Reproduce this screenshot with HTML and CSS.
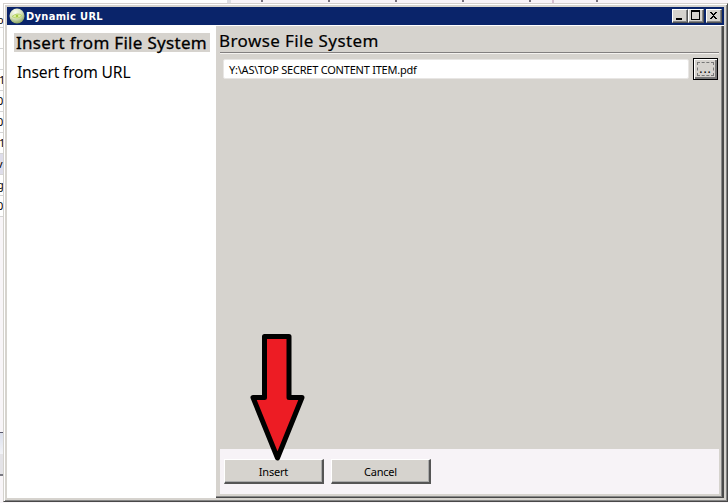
FILE: index.html
```
<!DOCTYPE html>
<html lang="en">
<head>
<meta charset="utf-8">
<title>Dynamic URL</title>
<link rel="stylesheet" href="styles.css">
</head>
<body>
<div class="backdrop">
  <div class="ticks"><i></i><i></i><i></i><i></i><i></i><i class="pink"></i><i></i></div>
  <div class="rows"><span class="first">o</span><span></span><span></span><span class="one">1</span><span>0</span><span>0</span><span class="one">1</span><span class="shade">v</span><span>g</span><span>0</span></div>
  <div class="lower"></div>
</div>
<main class="window">
  <header class="titlebar">
    <svg class="logo" width="16" height="16" viewBox="0 0 16 16">
      <defs><radialGradient id="orb" cx=".4" cy=".25" r=".8"><stop offset="0" stop-color="#fafbf3"/><stop offset=".55" stop-color="#d3dfb8"/><stop offset="1" stop-color="#7f9a50"/></radialGradient></defs>
      <circle cx="8" cy="8" r="7.5" fill="url(#orb)"/>
      <path d="M3 8.500Q8 4 13 7.500Q9 12 3 8.500Z" fill="#e0f0a8" stroke="#b4d165" stroke-width=".9"/>
      <circle cx="8" cy="8" r="1.300" fill="#a4ca42"/>
    </svg>
    <h1><span>Dynamic URL</span></h1>
    <div class="controls">
      <button><svg width="16" height="15"><path d="M4 10h6v2H4z"/></svg></button>
      <button><svg width="16" height="15"><path fill-rule="evenodd" d="M3 2h9v10H3zM4 4v7h7V4z"/></svg></button>
      <button class="close"><svg width="16" height="15"><path d="M4 4h2v1h1v1h1v-1h1v-1h2v1h-1v1h-1v1h-1v1h1v1h1v1h1v1H9v-1H8V9H7v1H6v1H4v-1h1V9h1V8h1V7H6V6H5V5H4z"/></svg></button>
    </div>
  </header>
  <div class="body">
    <nav>
      <a class="selected"><span>Insert from File System</span></a>
      <a><span class="narrow">Insert from URL</span></a>
    </nav>
    <section class="panel">
      <h2><span>Browse File System</span></h2>
      <div class="file">
        <div class="field"><span>Y:\AS\TOP SECRET CONTENT ITEM.pdf</span></div>
        <button class="browse"><span>...</span></button>
      </div>
      <footer>
        <button><span>Insert</span></button>
        <button><span>Cancel</span></button>
      </footer>
    </section>
  </div>
</main>
<svg class="arrow" width="56" height="130" viewBox="0 0 56 130">
  <path d="M15.500 4.500H40V65.500H53L28.500 126L4 65.500H15.500Z" fill="#ed1c24" stroke="#000" stroke-width="5" stroke-linejoin="round"/>
</svg>
</body>
</html>
```
FILE: styles.css
```
* { box-sizing: border-box; }
body { margin: 0; width: 728px; height: 503px; overflow: hidden; position: relative; background: #f8f5f8; color: #000; font: 11px/14px "Noto Sans", sans-serif; }
h1, h2 { margin: 0; font-size: inherit; }
span { white-space: nowrap; }
.backdrop { position: absolute; inset: 0; }
.ticks { height: 3px; padding-left: 261px; display: flex; gap: 65px; background: linear-gradient(90deg, #fff 227px, #dedee3 227px, #dedee3 231px, #f8f3f8 231px); }
.ticks i { width: 2px; height: 3px; background: repeating-linear-gradient(#77717d 0 2px, #f8f3f8 2px 3px); }
.ticks .pink { background: #d6bfd0; margin: 0 -23px 0 -44px; }
.rows { width: 4px; background: #fff; overflow: hidden; padding-top: 4px; }
.rows span { display: block; height: 21px; padding-top: 3px; border-bottom: 1px solid #d5d5d5; text-indent: -3px; }
.rows .first { padding-top: 6px; }
.rows .one { text-indent: -1px; }
.rows .shade { background: #deddea; }
.lower { position: absolute; top: 432px; left: 0; width: 4px; height: 44px; border-top: 1px solid #59596c; border-bottom: 2px solid #7a7a82; background: linear-gradient(#dce0ed, #f2f3f7 50%, #e4e3e7 50%); }
.window { position: absolute; left: 3px; top: 3px; width: 725px; height: 499px; padding: 3px 3px 2px 3px; background: #d6d3ce; border: 1px solid; border-color: #d5d0cd #484848 #484848 #d5d3ce; box-shadow: inset 1px 1px #fff, inset -1px -1px #858585; }
.titlebar { height: 18px; background: #0a246a; display: flex; align-items: center; padding: 0 2px; }
.logo { margin-right: 1px; }
h1 { flex: 1; color: #fff; font: bold 11px/19px "DejaVu Sans Condensed", sans-serif; }
h1 span { letter-spacing: .33px; }
button { appearance: none; margin: 0; padding: 0; border: solid; border-width: 1px 2px 2px 1px; border-color: #fff #555 #555 #fff; border-radius: 0; background: #d6d3ce; color: #000; font: inherit; letter-spacing: -.2px; }
.controls { display: flex; }
.controls button { width: 16px; height: 14px; border-width: 1px; box-shadow: inset -1px -1px #858585; overflow: hidden; }
.controls svg { display: block; margin: -2px 0 0 -1px; }
.controls .close { margin-left: 2px; }
.body { height: 473px; display: flex; border-top: 1px solid #fff; }
nav { width: 209px; background: #fff; padding: 7px 6px 0 7px; font-size: 17px; line-height: 19px; }
nav a { display: block; height: 19px; margin-bottom: 10px; padding-left: 2px; }
nav .selected { background: #d6d3ce; -webkit-text-stroke: .3px #000; letter-spacing: .3px; }
.narrow { display: inline-block; transform: scaleX(.92); transform-origin: left; letter-spacing: -.22px; padding-left: 1px; }
.panel { flex: 1; display: flex; flex-direction: column; padding: 4px 3px 3px 4px; border-right: 2px solid #4b4b4b; border-bottom: 1px solid #484848; box-shadow: inset -1px -1px #888; }
h2 { height: 23px; font-weight: 400; font-size: 17px; line-height: 22px; border-bottom: 1px solid #827f7f; box-shadow: 0 1px #f4f2ef; -webkit-text-stroke: .2px #000; letter-spacing: .4px; }
h2 span { margin-left: -1px; }
.file { display: flex; justify-content: space-between; padding: 5px 1px 0 3px; }
.field { width: 466px; height: 20px; margin-top: 1px; border: 1px solid #e8e6e4; border-radius: 2px; background: #fff; padding-left: 5px; line-height: 19px; letter-spacing: -.22px; }
.browse { width: 25px; height: 22px; border: 1px solid #000; box-shadow: inset 1px 1px #fff, inset -2px -2px #777; position: relative; font-size: 12px; line-height: 18px; letter-spacing: 1px; }
.browse::after { content: ""; position: absolute; inset: 3px; border: 1px dashed #777; }
footer { margin-top: auto; height: 45px; background: #f7f3f7; display: flex; gap: 7px; padding: 10px 4px; }
footer button { width: 100px; height: 25px; padding-top: 1px; box-shadow: inset -1px -1px #aaa; }
.arrow { position: absolute; left: 249px; top: 332px; }
```
